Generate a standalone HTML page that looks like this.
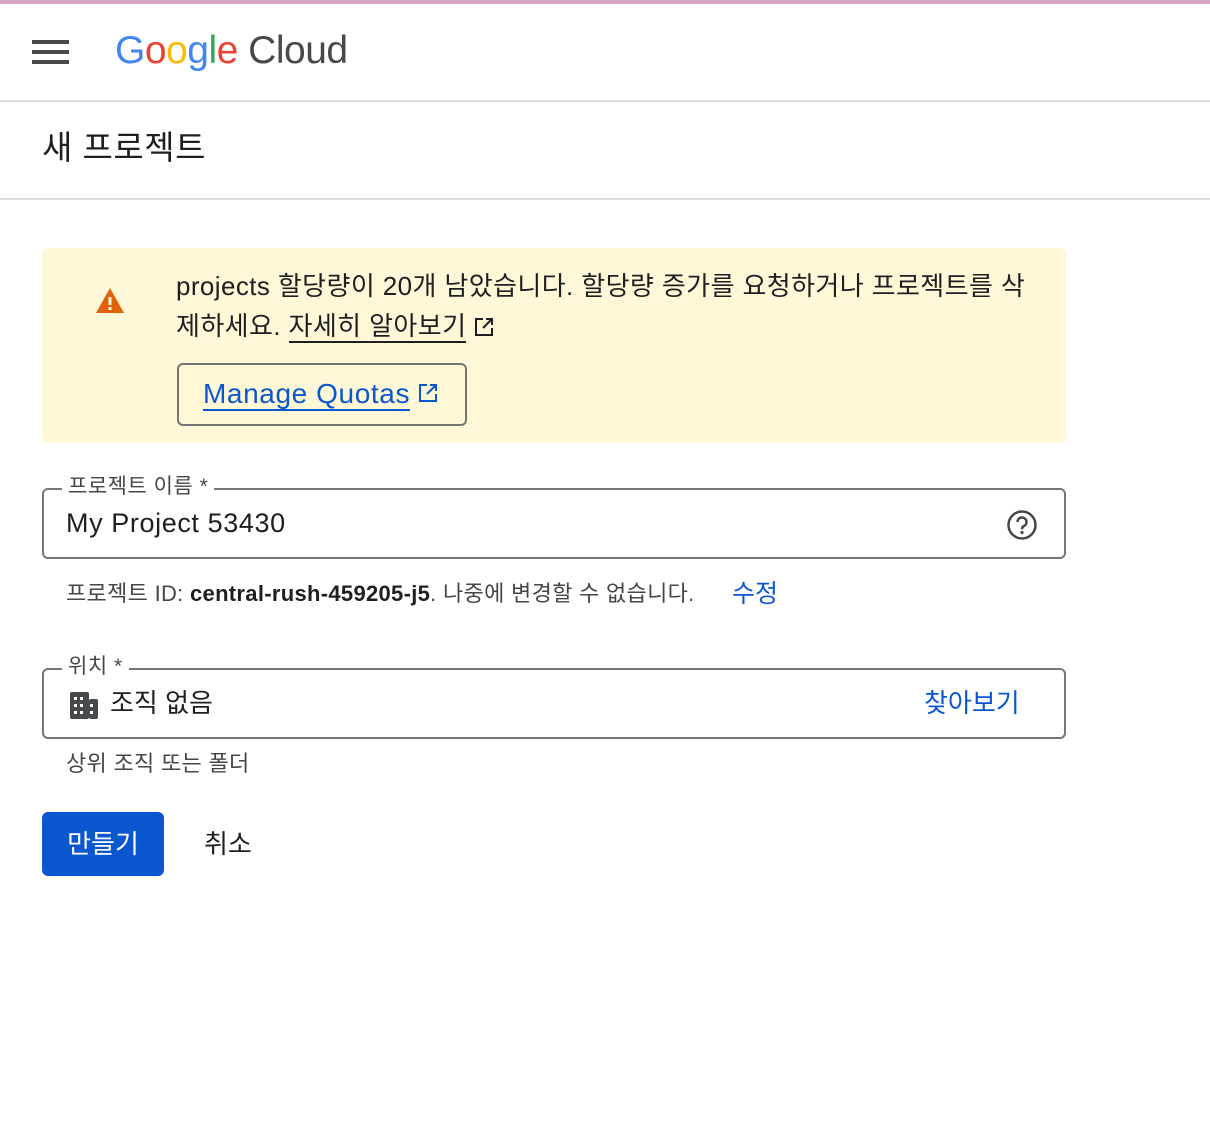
<!DOCTYPE html>
<html><head><meta charset="utf-8"><style>
*{box-sizing:border-box;margin:0;padding:0}
body{width:1210px;height:1148px;background:#fff;font-family:"Liberation Sans","Noto Sans CJK KR",sans-serif;color:#1f1f1f;position:relative;overflow:hidden}
.a{position:absolute}
.field{position:absolute;left:42px;width:1024px;height:71px;border:2px solid #747775;border-radius:6px}
.lab{position:absolute;top:-17px;left:18px;background:#fff;padding:0 6px;font-size:21px;color:#444746;line-height:28px;letter-spacing:0.5px}
</style></head><body>
<div class="a" style="left:0;top:0;width:1210px;height:4px;background:#d9a5c5"></div>
<div class="a" style="left:32px;top:40px;width:37px;height:4px;background:#474a4d"></div>
<div class="a" style="left:32px;top:50px;width:37px;height:4px;background:#474a4d"></div>
<div class="a" style="left:32px;top:60px;width:37px;height:4px;background:#474a4d"></div>
<div class="a" style="left:115px;top:26px;font-size:39px;line-height:50px;letter-spacing:-0.5px"><span style="color:#4285f4">G</span><span style="color:#ea4335">o</span><span style="color:#fbbc05">o</span><span style="color:#4285f4">g</span><span style="color:#34a853">l</span><span style="color:#ea4335">e</span> <span style="color:#474a4d">Cloud</span></div>
<div class="a" style="left:0;top:100px;width:1210px;height:2px;background:#dadce0"></div>
<div class="a" style="left:42px;top:126px;font-size:33px;line-height:44px;letter-spacing:0.5px">새 프로젝트</div>
<div class="a" style="left:0;top:198px;width:1210px;height:2px;background:#dadce0"></div>
<div class="a" style="left:42px;top:248px;width:1024px;height:195px;background:#fef7d8;border-radius:6px"></div>
<svg class="a" style="left:95px;top:287px" width="30" height="27" viewBox="0 0 30 27"><path d="M15 1L29 26H1Z" fill="#e0630b"/><rect x="13.5" y="10" width="3" height="8" fill="#fef7d8"/><rect x="13.5" y="20" width="3" height="3" fill="#fef7d8"/></svg>
<div class="a" style="left:176px;top:266px;font-size:26px;line-height:40px;width:890px;letter-spacing:0.4px;white-space:nowrap">projects 할당량이 20개 남았습니다. 할당량 증가를 요청하거나 프로젝트를 삭<br>제하세요. <span style="border-bottom:2px solid #1f1f1f">자세히 알아보기</span> <svg width="20" height="20" viewBox="0 0 20 20" style="vertical-align:-2px"><path d="M9 2H2V18H18V11M12 2H18V8M18 2L9 11" fill="none" stroke="#1f1f1f" stroke-width="2"/></svg></div>
<div class="a" style="left:177px;top:363px;width:290px;height:63px;border:2px solid #747775;border-radius:6px"></div>
<div class="a" style="left:203px;top:376px;font-size:28px;line-height:36px;color:#0b57d0;letter-spacing:0.6px;white-space:nowrap"><span style="border-bottom:2px solid #0b57d0">Manage Quotas</span> <svg width="20" height="20" viewBox="0 0 20 20" style="vertical-align:0"><path d="M9 2H2V18H18V11M12 2H18V8M18 2L9 11" fill="none" stroke="#0b57d0" stroke-width="2"/></svg></div>
<div class="field" style="top:488px"><div class="lab">프로젝트 이름 *</div>
<div class="a" style="left:22px;top:16px;font-size:27px;line-height:34px;letter-spacing:0.6px">My Project 53430</div>
<svg class="a" style="left:962px;top:19px" width="32" height="32" viewBox="0 0 32 32"><circle cx="16" cy="16" r="13.5" fill="none" stroke="#444746" stroke-width="2.5"/><path d="M11.5 13a4.5 4.5 0 1 1 6.5 4c-1.5.8-2 1.6-2 3.2" fill="none" stroke="#444746" stroke-width="2.5"/><circle cx="16" cy="23.5" r="1.6" fill="#444746"/></svg>
</div>
<div class="a" style="left:66px;top:580px;font-size:22px;line-height:28px;color:#444746;letter-spacing:0.3px;white-space:nowrap">프로젝트 ID: <b style="color:#1f1f1f;font-weight:bold">central-rush-459205-j5</b>. 나중에 변경할 수 없습니다.</div>
<div class="a" style="left:732px;top:578px;font-size:25px;line-height:32px;color:#0b57d0">수정</div>
<div class="field" style="top:668px"><div class="lab">위치 *</div>
<svg class="a" style="left:26px;top:22px" width="28" height="27" viewBox="0 0 28 27"><rect x="0" y="0" width="19" height="27" rx="2" fill="#474a4d"/><rect x="19" y="7" width="9" height="20" rx="2" fill="#474a4d"/><g fill="#fff"><rect x="4" y="5" width="3" height="3"/><rect x="10" y="5" width="3" height="3"/><rect x="4" y="12" width="3" height="3"/><rect x="10" y="12" width="3" height="3"/><rect x="4" y="19" width="3" height="3"/><rect x="10" y="19" width="3" height="3"/><rect x="20" y="12" width="3" height="3"/><rect x="20" y="19" width="3" height="3"/></g></svg>
<div class="a" style="left:66px;top:16px;font-size:26px;line-height:34px">조직 없음</div>
<div class="a" style="left:880px;top:16px;font-size:26px;line-height:34px;color:#0b57d0">찾아보기</div>
</div>
<div class="a" style="left:66px;top:750px;font-size:22px;line-height:28px;color:#444746;letter-spacing:0.3px">상위 조직 또는 폴더</div>
<div class="a" style="left:42px;top:812px;width:122px;height:64px;background:#0b57d0;border-radius:6px;color:#fff;font-size:26px;line-height:64px;text-align:center">만들기</div>
<div class="a" style="left:204px;top:828px;font-size:26px;line-height:32px;color:#1f1f1f">취소</div>
</body></html>
